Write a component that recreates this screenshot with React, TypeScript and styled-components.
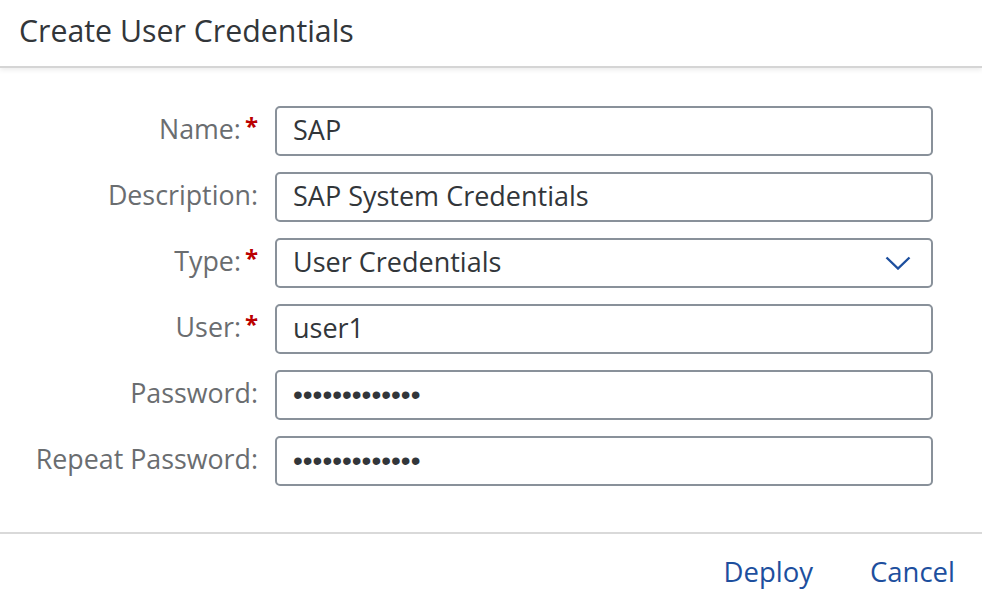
import React from 'react';
import styled, { createGlobalStyle } from 'styled-components';

const GlobalStyle = createGlobalStyle`
    html, body {
        margin: 0;
        padding: 0;
        background: #ffffff;
        font-family: "Open Sans", "Liberation Sans", sans-serif;
    }
`

const Dialog = styled.div`
    width: 982px;
    height: 600px;
    display: flex;
    flex-direction: column;
    background: #ffffff;
    overflow: hidden;
`

const Header = styled.header`
    height: 66px;
    display: flex;
    align-items: center;
    padding: 0 19px;
    border-bottom: 2px solid #d5d5d5;
    box-shadow: 0 2px 5px rgba(0, 0, 0, 0.08);
    position: relative;
    z-index: 1;
`

const Title = styled.h1`
    margin: 0;
    margin-top: -5px;
    font-size: 30.3px;
    font-weight: 400;
    color: #32363a;
`

const Form = styled.div`
    flex: 1;
    display: grid;
    grid-template-columns: 258px 658px;
    column-gap: 17px;
    row-gap: 16px;
    align-content: start;
    padding-top: 38px;
`

const Label = styled.label`
    display: flex;
    justify-content: flex-end;
    align-items: center;
    font-size: 26.8px;
    color: #6a6d70;
    margin-top: -5px;
    white-space: nowrap;
`

const Required = styled.span`
    color: #bb0000;
    font-weight: 700;
    font-size: 24px;
    margin-left: 4px;
    align-self: flex-start;
    margin-top: 8px;
`

const Field = styled.div`
    height: 50px;
    box-sizing: border-box;
    border: 2px solid #89919a;
    border-radius: 5px;
    display: flex;
    align-items: center;
    padding: 0 16px;
    font-size: 27px;
    color: #32363a;
`

const Value = styled.span`
    flex: 1;
    margin-top: -3px;
`

const Mask = styled.input`
    flex: 1;
    border: none;
    outline: none;
    padding: 0;
    background: transparent;
    font-family: "Liberation Sans", sans-serif;
    font-size: 28px;
    letter-spacing: 0;
    color: #32363a;
`

const Chevron = styled.svg`
    width: 26px;
    height: 14px;
    margin-right: 4px;
`

const Footer = styled.footer`
    height: 66px;
    border-top: 2px solid #d9d9d9;
    display: flex;
    justify-content: flex-end;
    align-items: center;
    gap: 57px;
    padding-right: 27px;
`

const LinkButton = styled.button`
    border: none;
    background: none;
    padding: 0;
    margin-top: 8px;
    font-family: "Open Sans", "Liberation Sans", sans-serif;
    font-size: 27.5px;
    color: #1d4f9e;
    cursor: pointer;
`

type Row = {
    label: string
    required?: boolean
    value: string
    kind?: 'text' | 'select' | 'password'
}

const rows: Row[] = [
    { label: 'Name:', required: true, value: 'SAP' },
    { label: 'Description:', value: 'SAP System Credentials' },
    { label: 'Type:', required: true, value: 'User Credentials', kind: 'select' },
    { label: 'User:', required: true, value: 'user1' },
    { label: 'Password:', value: 'secretpasswrd', kind: 'password' },
    { label: 'Repeat Password:', value: 'secretpasswrd', kind: 'password' },
]

const App: React.FC = () => {
    return (
        <Dialog>
            <GlobalStyle />
            <Header>
                <Title>Create User Credentials</Title>
            </Header>
            <Form>
                {rows.map((row) => (
                    <React.Fragment key={row.label}>
                        <Label>
                            {row.label}
                            {row.required && <Required>*</Required>}
                        </Label>
                        <Field>
                            {row.kind === 'password' ? (
                                <Mask type="password" value={row.value} readOnly />
                            ) : (
                                <Value>{row.value}</Value>
                            )}
                            {row.kind === 'select' && (
                                <Chevron viewBox="0 0 26 14">
                                    <path d="M1.5 1.5 L13 12.5 L24.5 1.5" fill="none" stroke="#1d4f9e" strokeWidth="2.4" />
                                </Chevron>
                            )}
                        </Field>
                    </React.Fragment>
                ))}
            </Form>
            <Footer>
                <LinkButton>Deploy</LinkButton>
                <LinkButton>Cancel</LinkButton>
            </Footer>
        </Dialog>
    )
};

export default App;
